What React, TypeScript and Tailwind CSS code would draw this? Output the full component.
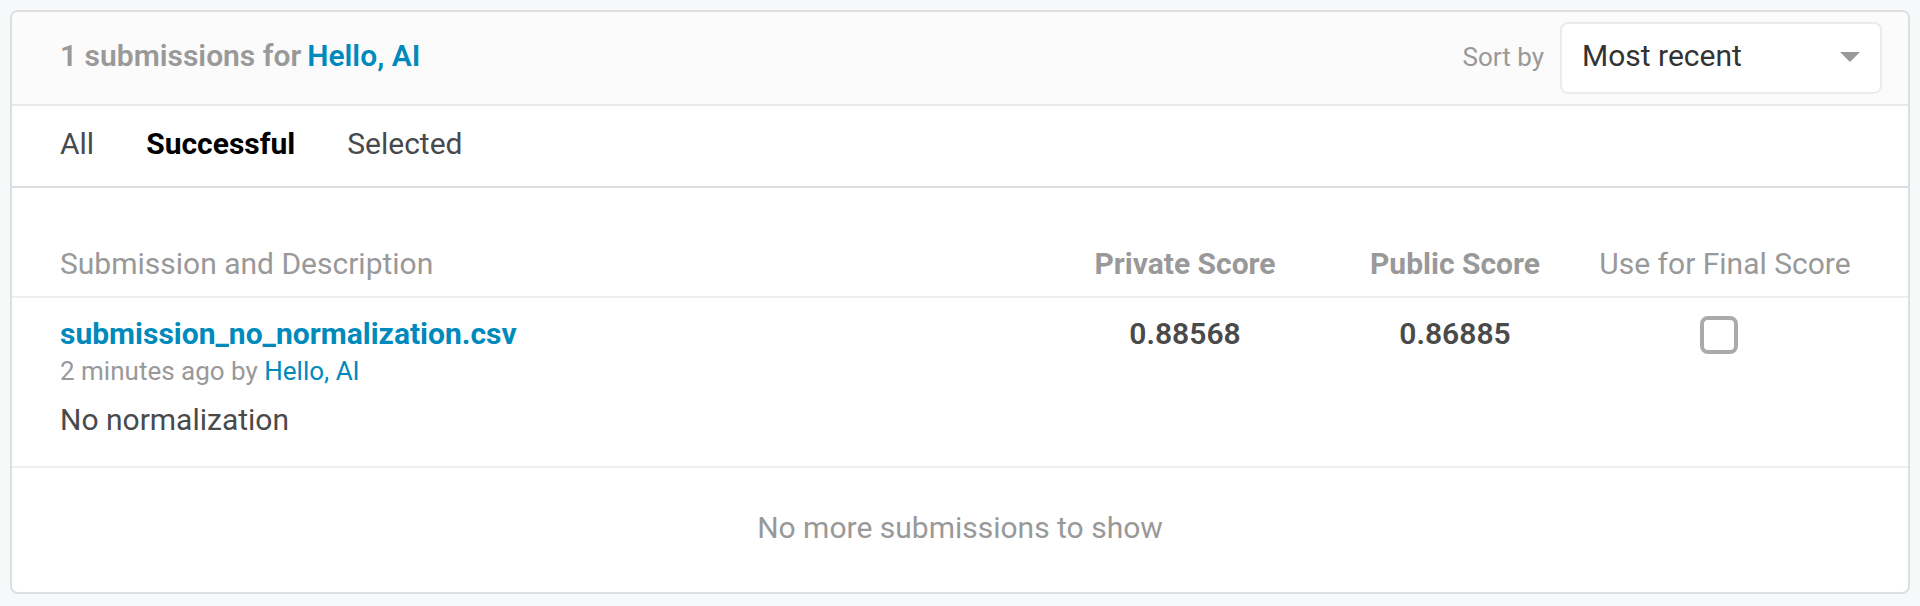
import { useState } from "react";

const tabs = ["All", "Successful", "Selected"];

const submissions = [
  {
    file: "submission_no_normalization.csv",
    age: "2 minutes ago",
    author: "Hello, AI",
    description: "No normalization",
    privateScore: "0.88568",
    publicScore: "0.86885",
  },
];

export default function App() {
  const [activeTab, setActiveTab] = useState("Successful");

  return (
    <div className="min-h-screen bg-[#f5f9fa] px-2.5 pt-2.5 pb-3 font-['Roboto','Liberation_Sans',sans-serif] text-[30px] leading-10 text-[#4a4a4a]">
      <main className="overflow-hidden rounded-lg border-2 border-[#dcdedf] bg-white">
        <header className="flex items-center justify-between border-b-2 border-[#ebebeb] bg-[#fbfbfb] py-2.5 pr-[26px] pl-12">
          <h1 className="flex gap-1.5 pb-1 font-semibold text-[#999]">
            1 submissions for
            <a href="#team" className="text-[#008abc]">
              Hello, AI
            </a>
          </h1>
          <div className="flex items-center gap-4">
            <label htmlFor="sort" className="pb-0.5 text-[26px] text-[#999]">
              Sort by
            </label>
            <div className="relative">
              <select
                id="sort"
                className="block h-[72px] w-[322px] appearance-none rounded-lg border-2 border-[#ebebeb] bg-white pr-16 pb-1 pl-5 text-[#333]"
              >
                <option>Most recent</option>
                <option>Public score</option>
              </select>
              <svg
                viewBox="0 0 20 10"
                className="pointer-events-none absolute top-[30px] right-[22px] h-2.5 w-5 fill-[#999]"
                aria-hidden="true"
              >
                <path d="M0 0h20L10 10z" />
              </svg>
            </div>
          </div>
        </header>

        <nav className="flex gap-[52px] border-b-2 border-[#dcdedf] pt-[18px] pb-[22px] pl-12">
          {tabs.map((tab) => (
            <button
              key={tab}
              type="button"
              onClick={() => setActiveTab(tab)}
              className={tab === activeTab ? "font-bold text-black" : "text-[#47494d]"}
            >
              {tab}
            </button>
          ))}
        </nav>

        <table className="w-full table-fixed border-collapse">
          <colgroup>
            <col />
            <col className="w-[270px]" />
            <col className="w-[270px]" />
            <col className="w-[318px]" />
          </colgroup>
          <thead className="text-[#999]">
            <tr className="border-b-2 border-[#eee]">
              <th className="pt-14 pb-3 pl-12 text-left font-normal">Submission and Description</th>
              <th className="pt-14 pb-3 font-bold">Private Score</th>
              <th className="pt-14 pb-3 font-bold">Public Score</th>
              <th className="pt-14 pr-12 pb-3 font-normal whitespace-nowrap">Use for Final Score</th>
            </tr>
          </thead>
          <tbody>
            {submissions.map((item) => (
              <tr key={item.file} className="border-b-2 border-[#eee] align-top">
                <td className="pt-4 pb-[26px] pl-12">
                  <a href="#file" className="block font-bold text-[#008abc]">
                    {item.file}
                  </a>
                  <p className="text-[26px] leading-[34px] text-[#999]">
                    {item.age} by{" "}
                    <a href="#team" className="text-[#008abc]">
                      {item.author}
                    </a>
                  </p>
                  <p className="pt-3">{item.description}</p>
                </td>
                <td className="pt-4 text-center font-semibold">{item.privateScore}</td>
                <td className="pt-4 text-center font-semibold">{item.publicScore}</td>
                <td className="pt-[18px] pr-[60px]">
                  <input
                    type="checkbox"
                    aria-label="Use for Final Score"
                    className="mx-auto block size-[38px] appearance-none rounded-lg border-4 border-[#aaa] bg-white checked:bg-[#008abc]"
                  />
                </td>
              </tr>
            ))}
          </tbody>
        </table>

        <p className="pt-10 pb-11 text-center text-[#999]">No more submissions to show</p>
      </main>
    </div>
  );
}
